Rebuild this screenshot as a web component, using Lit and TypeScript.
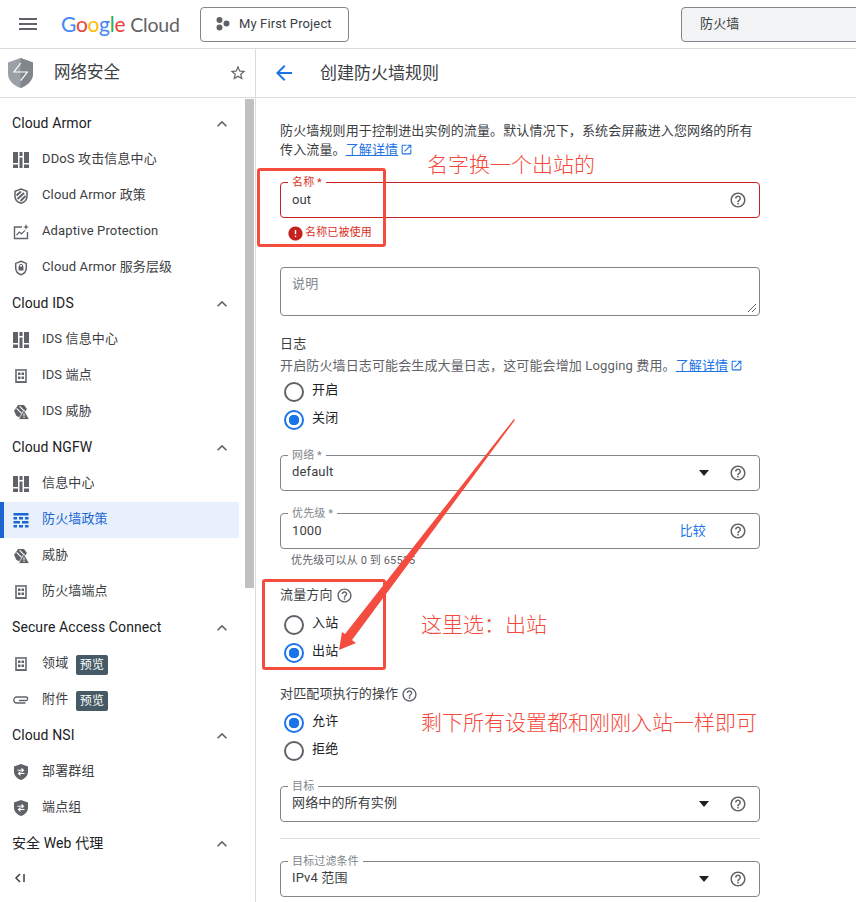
import { LitElement, html, css, svg } from 'lit';
import { customElement } from 'lit/decorators.js';

const ICONS: Record<string, unknown> = {
  dash: svg`<path fill="#5f6368" d="M0 0h5v11H0zM0 12.500h5V16H0zM6.500 0h3v4h-3zM6.500 5.500h3V16h-3zM11 0h5v11h-5zM11 12.500h5V16h-5z"/>`,
  armor: svg`<path fill="none" stroke="#5f6368" stroke-width="1.500" d="M8 1l6 2.200v5c0 3.400-2.600 6-6 7-3.400-1-6-3.600-6-7v-5z"/><path fill="none" stroke="#5f6368" stroke-width="1.900" d="M3.500 7.500l4.500-4M4.500 11L11 5M7.500 13l5-5"/>`,
  adaptive: svg`<path fill="none" stroke="#5f6368" stroke-width="1.400" d="M9 3H1.500v11.500h13V8"/><path fill="none" stroke="#5f6368" stroke-width="1.200" d="M3.500 11l3-3 2 1.800 3.500-3.500"/><path fill="#5f6368" d="M13 0l.8 2.200 2.200.8-2.200.8L13 6l-.8-2.200L10 3l2.200-.8z"/>`,
  tier: svg`<path fill="none" stroke="#5f6368" stroke-width="1.500" d="M8 1.200l5.300 2.200v4.400c0 3.400-2 6-5.300 7-3.300-1-5.300-3.600-5.300-7V3.400z"/><path fill="#5f6368" d="M5.500 6.500h5v4h-5z"/><circle cx="8" cy="6" r="1.700" fill="none" stroke="#5f6368"/>`,
  endpoint: svg`<path fill="none" stroke="#80868b" stroke-width="2" d="M3 2h10v12H3z"/><path fill="#5f6368" d="M3 13.500h10V15H3zM5 4.500h2.500V7H5zM8.500 4.500H11V7H8.500zM5 8.500h2.500V11H5zM8.500 8.500H11V11H8.500z"/>`,
  threat: svg`<path fill="#5f6368" d="M5 1h6l3 4-2.500 3.500L8 14 3.500 12 1 7z"/><path fill="#fff" d="M4 4l5 5-.8.800-5-5zM7 2l4 4-.8.800-4-4z"/><path fill="#5f6368" stroke="#fff" stroke-width=".8" d="M11 6l5.500 9.500h-11z"/><path fill="#fff" d="M10.500 9.500h1v3h-1zM10.500 13h1v1h-1z"/>`,
  clip: svg`<path fill="none" stroke="#5f6368" stroke-width="1.300" d="M6 8.500h7a1.700 1.700 0 0 0 0-3.500H3.800a3 3 0 0 0 0 6h8.700"/>`,
  group: svg`<path fill="#5f6368" d="M8 0l7 2.500v5.300c0 3.700-3 7-7 8.200-4-1.200-7-4.500-7-8.200V2.500z"/><path fill="none" stroke="#fff" stroke-width="1.100" d="M4.500 6.300h5.500M8.500 4.500l2 1.800-2 1.800M11.500 9.500H6M7.500 7.700l-2 1.800 2 1.800"/>`,
  wall: svg`<path fill="#1967d2" d="M.5 1H15.500v2.600H.5zM.5 5H4v2.600H.5zM6 5h4v2.600H6zM12 5h3.500v2.600H12zM.5 9H7v2.600H.5zM9 9h6.500v2.600H9zM.5 13H4v2.600H.5zM6 13h4v2.600H6zM12 13h3.500v2.600H12z"/>`,
};

// row: [icon, label, preview badge]
const NAV: { title: string; items: [string, string, boolean?][] }[] = [
  { title: 'Cloud Armor', items: [['dash', 'DDoS 攻击信息中心'], ['armor', 'Cloud Armor 政策'], ['adaptive', 'Adaptive Protection'], ['tier', 'Cloud Armor 服务层级']] },
  { title: 'Cloud IDS', items: [['dash', 'IDS 信息中心'], ['endpoint', 'IDS 端点'], ['threat', 'IDS 威胁']] },
  { title: 'Cloud NGFW', items: [['dash', '信息中心'], ['wall', '防火墙政策'], ['threat', '威胁'], ['endpoint', '防火墙端点']] },
  { title: 'Secure Access Connect', items: [['endpoint', '领域', true], ['clip', '附件', true]] },
  { title: 'Cloud NSI', items: [['group', '部署群组'], ['group', '端点组']] },
  { title: '安全 Web 代理', items: [] },
];

const helpIcon = html`<svg class="help" viewBox="0 0 24 24"><path d="M11 18h2v-2h-2v2zm1-16C6.480 2 2 6.480 2 12s4.480 10 10 10 10-4.480 10-10S17.520 2 12 2zm0 18c-4.410 0-8-3.590-8-8s3.590-8 8-8 8 3.590 8 8-3.590 8-8 8zm0-14c-2.210 0-4 1.790-4 4h2c0-1.100.9-2 2-2s2 .9 2 2c0 2-3 1.750-3 5h2c0-2.250 3-2.500 3-5 0-2.210-1.790-4-4-4z"/></svg>`;
const caret = html`<span class="caret"></span>`;
const openIcon = html`<svg class="open" viewBox="0 0 24 24"><path d="M19 19H5V5h7V3H5c-1.110 0-2 .9-2 2v14c0 1.100.89 2 2 2h14c1.100 0 2-.9 2-2v-7h-2v7zM14 3v2h3.590l-9.830 9.830 1.410 1.410L19 6.410V10h2V3h-7z"/></svg>`;

@customElement('app-root')
export class AppRoot extends LitElement {
  static styles = css`
    :host {
      display: block;
      position: relative;
      height: 100vh;
      overflow: hidden;
      background: #fff;
      color: #3c4043;
      font: 13px/18px Roboto, "Noto Sans CJK SC", sans-serif;
      letter-spacing: 0.13px;
    }
    svg { display: block; flex: none; }

    .topbar {
      height: 48px;
      display: flex;
      align-items: center;
      border-bottom: 1px solid #dadce0;
      overflow: hidden;
    }
    .menu { width: 18px; margin-left: 19px; flex: none; }
    .logo {
      margin-left: 24px;
      width: 119px;
      flex: none;
      font: 21px/30px Lato, sans-serif;
      letter-spacing: -0.3px;
      white-space: nowrap;
      color: #5f6368;
    }
    .logo .b { color: #4285f4; }
    .logo .r { color: #ea4335; }
    .logo .y { color: #fbbc04; }
    .logo .g { color: #34a853; }
    .logo .cloud { margin-left: 5px; font-size: 19.500px; letter-spacing: -0.2px; }
    .project {
      margin-left: 20px;
      width: 149px;
      height: 35px;
      box-sizing: border-box;
      flex: none;
      display: flex;
      align-items: center;
      gap: 9px;
      padding-left: 15px;
      border: 1px solid #80868b;
      border-radius: 4px;
    }
    .search {
      margin-left: 332px;
      width: 200px;
      height: 35px;
      box-sizing: border-box;
      flex: none;
      display: flex;
      align-items: center;
      padding-left: 18px;
      border: 1px solid #80868b;
      border-radius: 4px;
      background: #f1f3f4;
    }

    .body { display: flex; height: 853px; }
    .side {
      width: 255px;
      flex: none;
      border-right: 1px solid #dadce0;
      display: flex;
      flex-direction: column;
      position: relative;
    }
    .side-head {
      height: 48px;
      flex: none;
      display: flex;
      align-items: center;
      border-bottom: 1px solid #dadce0;
      padding-left: 8px;
    }
    .side-head .name { margin-left: 21px; font-size: 16.500px; letter-spacing: 0; flex: 1; }
    .side-head .star { margin-right: 8px; }
    .nav { flex: 1; padding-top: 8px; width: 239px; overflow: hidden; }
    .row {
      height: 36px;
      display: flex;
      align-items: center;
      box-sizing: border-box;
      padding-left: 13px;
      white-space: nowrap;
    }
    .row .ic { width: 16px; height: 16px; margin-right: 13px; }
    .row .label { position: relative; top: -1px; }
    .row.active { background: #e8f0fe; color: #1967d2; border-left: 4px solid #1967d2; padding-left: 9px; }
    .sec {
      height: 36px;
      display: flex;
      align-items: center;
      padding: 0 7px 0 12px;
      justify-content: space-between;
      font-size: 14px;
      letter-spacing: 0.1px;
      color: #202124;
    }
    .sec .label { position: relative; top: -1px; }
    .badge {
      margin-left: 8px;
      background: #455a64;
      color: #fff;
      font-size: 12px;
      line-height: 20px;
      padding: 0 3.500px;
      border-radius: 2px;
      position: relative;
      top: 1px;
    }
    .thumb { position: absolute; left: 245px; top: 50px; width: 9px; height: 489px; background: #c1c1c1; }
    .collapse { position: absolute; left: 10px; bottom: 15px; }

    .page { flex: 1; min-width: 0; display: flex; flex-direction: column; }
    .page-head {
      height: 48px;
      flex: none;
      display: flex;
      align-items: center;
      border-bottom: 1px solid #dadce0;
      padding-left: 16px;
    }
    .page-head h1 { margin: 0 0 0 24px; font-size: 17px; font-weight: 400; letter-spacing: 0; }
    .form { width: 480px; margin-left: 24px; display: flex; flex-direction: column; }
    .intro { margin-top: 23px; line-height: 19px; }
    .intro .line { width: fit-content; }
    a { color: #1a73e8; text-decoration: underline; }
    .open { width: 13px; height: 13px; fill: #1a73e8; display: inline-block; vertical-align: -2px; margin-left: 2px; }

    .field {
      position: relative;
      height: 36px;
      box-sizing: border-box;
      flex: none;
      display: flex;
      align-items: center;
      gap: 16px;
      padding: 0 12px 0 11px;
      border: 1px solid #80868b;
      border-radius: 4px;
    }
    .field .val { flex: 1; position: relative; top: -1px; }
    .field label {
      position: absolute;
      left: 7px;
      top: -6px;
      padding: 0 4px;
      background: #fff;
      font-size: 11px;
      line-height: 12px;
      color: #80868b;
    }
    .field.err { border-color: #c5221f; }
    .field.err .val, .field.low .val { top: 0; }
    .field.err label { color: #d93025; }
    .field.area { height: 49px; align-items: flex-start; color: #80868b; padding-top: 7px; }
    .grip { position: absolute; right: 2px; bottom: 2px; }
    .help { width: 18px; height: 18px; fill: #5f6368; flex: none; }
    .caret { width: 0; height: 0; border: 5.500px solid transparent; border-top: 6px solid #202124; border-bottom: 0; margin-right: 4px; flex: none; }
    .compare { color: #1a73e8; margin-right: 7px; }
    .error { margin: 7px 0 0 7px; height: 16px; display: flex; align-items: center; gap: 1px; font-size: 11px; color: #d93025; }
    .error svg { width: 17px; height: 17px; fill: #c5221f; }

    .hd { display: flex; align-items: center; gap: 3px; height: 20px; }
    .hd .help { width: 17px; height: 17px; }
    .sub { margin-top: 3px; white-space: nowrap; color: #5f6368; }
    .hint { margin: 4px 0 0 11px; font-size: 11px; line-height: 16px; color: #5f6368; }
    .radio { height: 28px; display: flex; align-items: center; gap: 8px; padding-left: 4px; }
    .radio i {
      width: 20px;
      height: 20px;
      box-sizing: border-box;
      border: 2px solid #5f6368;
      border-radius: 50%;
      flex: none;
    }
    .radio.on i { border-color: #1a73e8; background: radial-gradient(circle, #1a73e8 5px, #fff 5.500px); }
    .radio span { position: relative; top: -2px; color: #202124; }
    hr { width: 100%; margin: 16px 0 0; border: 0; border-top: 1px solid #dadce0; }

    .mt16 { margin-top: 16px; }
    .mt17 { margin-top: 17px; }
    .mt18 { margin-top: 18px; }
    .mt21 { margin-top: 21px; }
    .mt22 { margin-top: 22px; }
    .mt23 { margin-top: 23px; }
    .mt26 { margin-top: 26px; }
    .gap3 { margin-top: 3px; }
    .gap5 { margin-top: 5px; }
    .gap6 { margin-top: 6px; }

    .mark { position: absolute; border: 3px solid #f44c3f; border-radius: 3px; box-sizing: border-box; }
    .m1 { left: 257px; top: 168px; width: 129px; height: 79px; }
    .m2 { left: 262px; top: 579px; width: 124px; height: 91px; }
    .note {
      position: absolute;
      font-size: 21px;
      line-height: 28px;
      font-weight: 300;
      letter-spacing: 0;
      color: #f4493c;
      white-space: nowrap;
    }
    .n1 { left: 427px; top: 151px; }
    .n2 { left: 421px; top: 611px; }
    .n3 { left: 421px; top: 709px; }
    .arrow { position: absolute; left: 0; top: 0; pointer-events: none; }
  `;

  private navRow(icon: string, label: string, badge?: boolean) {
    return html`<div class="row ${icon === 'wall' ? 'active' : ''}">
      <svg class="ic" viewBox="0 0 16 16">${ICONS[icon]}</svg>
      <span class="label">${label}</span>
      ${badge ? html`<span class="badge">预览</span>` : ''}
    </div>`;
  }

  private radio(label: string, on: boolean) {
    return html`<div class="radio ${on ? 'on' : ''}"><i></i><span>${label}</span></div>`;
  }

  private select(label: string, value: string, cls: string) {
    return html`<div class="field ${cls}">
      <label>${label}</label><span class="val">${value}</span>${caret}${helpIcon}
    </div>`;
  }

  render() {
    return html`
      <header class="topbar">
        <svg class="menu" viewBox="0 0 18 12"><path fill="#5f6368" d="M0 0h18v2H0zM0 5h18v2H0zM0 10h18v2H0z"/></svg>
        <div class="logo"><span class="b">G</span><span class="r">o</span><span class="y">o</span><span class="b">g</span><span class="g">l</span><span class="r">e</span><span class="cloud">Cloud</span></div>
        <div class="project">
          <svg width="14" height="14" viewBox="0 0 14 14"><g fill="#5f6368"><circle cx="3.500" cy="3" r="3"/><circle cx="3.500" cy="10.500" r="3"/><circle cx="10.500" cy="6.500" r="3"/></g></svg>
          My First Project
        </div>
        <div class="search">防火墙</div>
      </header>
      <div class="body">
        <aside class="side">
          <div class="side-head">
            <svg width="25" height="30" viewBox="0 0 25 30">
              <path fill="#9aa0a6" d="M12.500 0L25 4.500v11C25 22 20 27.500 12.500 30 5 27.500 0 22 0 15.500v-11z"/>
              <path fill="#80868b" d="M12.500 0L25 4.500v11C25 22 20 27.500 12.500 30z"/>
              <path fill="none" stroke="#fff" stroke-width="1.200" d="M12.700 5L6 14h13.300l-6.600 8.700"/>
            </svg>
            <span class="name">网络安全</span>
            <svg class="star" width="18" height="18" viewBox="0 0 24 24"><path fill="#5f6368" d="M22 9.240l-7.190-.62L12 2 9.190 8.630 2 9.240l5.460 4.730L5.820 21 12 17.270 18.180 21l-1.630-7.030L22 9.240zM12 15.400l-3.760 2.270 1-4.280-3.320-2.880 4.380-.38L12 6.100l1.710 4.040 4.380.38-3.320 2.880 1 4.280L12 15.400z"/></svg>
          </div>
          <nav class="nav">
            ${NAV.map(s => html`
              <div class="sec"><span class="label">${s.title}</span>
                <svg width="20" height="20" viewBox="0 0 24 24"><path fill="#5f6368" d="M12 8l-6 6 1.410 1.410L12 10.830l4.590 4.580L18 14z"/></svg>
              </div>
              ${s.items.map(i => this.navRow(i[0], i[1], i[2]))}
            `)}
          </nav>
          <div class="thumb"></div>
          <svg class="collapse" width="18" height="18" viewBox="0 0 18 18"><path fill="none" stroke="#3c4043" stroke-width="1.500" d="M10 5L6 9l4 4M14 5v8"/></svg>
        </aside>
        <main class="page">
          <div class="page-head">
            <svg width="24" height="24" viewBox="0 0 24 24"><path fill="#1a73e8" d="M20 11H7.830l5.590-5.590L12 4l-8 8 8 8 1.410-1.410L7.830 13H20v-2z"/></svg>
            <h1>创建防火墙规则</h1>
          </div>
          <div class="form">
            <div class="intro">
              <div class="line">防火墙规则用于控制进出实例的流量。默认情况下，系统会屏蔽进入您网络的所有</div>
              <div class="line">传入流量。<a>了解详情</a>${openIcon}</div>
            </div>
            <div class="field err mt23"><label>名称 *</label><span class="val">out</span>${helpIcon}</div>
            <div class="error"><svg viewBox="0 0 24 24"><path d="M12 2C6.480 2 2 6.480 2 12s4.480 10 10 10 10-4.480 10-10S17.520 2 12 2zm1 15h-2v-2h2v2zm0-4h-2V7h2v6z"/></svg>名称已被使用</div>
            <div class="field area mt26">说明
              <svg class="grip" width="10" height="10" viewBox="0 0 10 10"><path fill="none" stroke="#5f6368" d="M1 9l8-8M5 9l4-4"/></svg>
            </div>
            <div class="hd mt18">日志</div>
            <div class="sub">开启防火墙日志可能会生成大量日志，这可能会增加 Logging 费用。<a>了解详情</a>${openIcon}</div>
            <div class="gap3">${this.radio('开启', false)}${this.radio('关闭', true)}</div>
            ${this.select('网络 *', 'default', 'mt21')}
            <div class="field low mt22"><label>优先级 *</label><span class="val">1000</span><span class="compare">比较</span>${helpIcon}</div>
            <div class="hint">优先级可以从 0 到 65535</div>
            <div class="hd mt16">流量方向 ${helpIcon}</div>
            <div class="gap6">${this.radio('入站', false)}${this.radio('出站', true)}</div>
            <div class="hd mt17">对匹配项执行的操作 ${helpIcon}</div>
            <div class="gap5">${this.radio('允许', true)}${this.radio('拒绝', false)}</div>
            ${this.select('目标', '网络中的所有实例', 'mt21')}
            <hr />
            ${this.select('目标过滤条件', 'IPv4 范围', 'mt22')}
          </div>
        </main>
      </div>

      <div class="mark m1"></div>
      <div class="mark m2"></div>
      <div class="note n1">名字换一个出站的</div>
      <div class="note n2">这里选：出站</div>
      <div class="note n3">剩下所有设置都和刚刚入站一样即可</div>
      <svg class="arrow" width="856" height="902"><path fill="#f44c3f" d="M514 419L345 634l-3-2-3 18 17-7-4-3L515 420z"/></svg>
    `;
  }
}
